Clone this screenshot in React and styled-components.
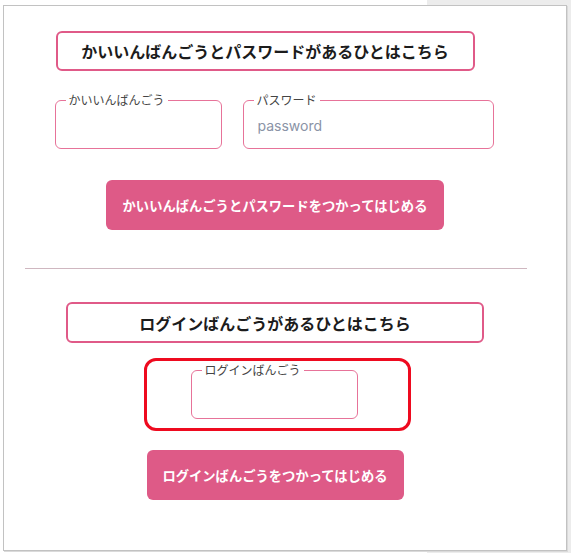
import React from 'react';
import styled, { createGlobalStyle } from 'styled-components';

const GlobalStyle = createGlobalStyle`
  html, body {
    margin: 0;
    padding: 0;
  }
  body {
    font-family: Inter, "Noto Sans CJK JP", sans-serif;
    background: linear-gradient(to right, #ffffff 0, #ffffff 427px, #ececec 427px);
  }
`;

const Page = styled.div`
  min-height: 553px;
  padding: 5px 4px 2px 3px;
  box-sizing: border-box;
`;

const Panel = styled.div`
  background: #fff;
  border: 1px solid #c2c2c2;
  box-shadow: 1px 1px 0 #dadada;
  height: 546px;
  box-sizing: border-box;
  padding: 25px 40px 0 20px;
`;

const Column = styled.div`
  display: flex;
  flex-direction: column;
  align-items: center;
`;

const Title = styled.div`
  width: ${(p) => p.$width || 418}px;
  height: ${(p) => p.$height || 40}px;
  box-sizing: border-box;
  border: 2px solid #e05a88;
  border-radius: 6px;
  display: flex;
  align-items: center;
  justify-content: center;
  font-family: "Noto Sans CJK JP", sans-serif;
  font-size: 16px;
  font-weight: 700;
  color: #1c1c1c;
  transform: translateX(${(p) => p.$shift || 0}px);
  margin-bottom: ${(p) => p.$gap || 0}px;
`;

const FieldRow = styled.div`
  display: flex;
  gap: 21px;
  margin-bottom: 31px;
  transform: translateX(-1px);
`;

const Field = styled.fieldset`
  margin: 0;
  width: ${(p) => p.$width}px;
  box-sizing: border-box;
  padding: 0 10px 5px;
  border: 1px solid #e77399;
  border-radius: 6px;
  min-inline-size: 0;
`;

const Legend = styled.legend`
  padding: 0 3px;
  font-family: "Noto Sans CJK JP", sans-serif;
  font-size: 12px;
  line-height: 14px;
  color: #444;
`;

const Input = styled.input`
  display: block;
  width: 100%;
  height: 36px;
  box-sizing: border-box;
  border: none;
  outline: none;
  padding: 0 4px;
  font-family: Inter, sans-serif;
  font-size: 14px;
  color: #333;
  background: transparent;

  &::placeholder {
    color: #8a93a6;
  }
`;

const Button = styled.button`
  width: ${(p) => p.$width}px;
  height: 50px;
  padding: 0;
  border: none;
  border-radius: 6px;
  background: #de5a87;
  color: #fff;
  font-family: "Noto Sans CJK JP", sans-serif;
  font-size: 13.3px;
  font-weight: 700;
  cursor: pointer;
  margin-bottom: ${(p) => p.$gap || 0}px;
`;

const Divider = styled.hr`
  align-self: stretch;
  margin: 0 -1px 33px 1px;
  border: none;
  border-top: 1px solid #cfb7c0;
`;

const LoginBox = styled.div`
  width: 267px;
  box-sizing: border-box;
  border: 3px solid #ee0a1f;
  border-radius: 12px;
  padding: 2px 50px 9px 44px;
  margin: 15px 0 19px;
  transform: translateX(2px);
`;

export default function App() {
  return (
    <>
      <GlobalStyle />
      <Page>
        <Panel>
          <Column>
            <Title $width={419} $shift={-10} $gap={22}>
              かいいんばんごうとパスワードがあるひとはこちら
            </Title>
            <FieldRow>
              <Field $width={167}>
                <Legend>かいいんばんごう</Legend>
                <Input type="text" />
              </Field>
              <Field $width={251}>
                <Legend>パスワード</Legend>
                <Input type="password" placeholder="password" />
              </Field>
            </FieldRow>
            <Button $width={338} $gap={38}>
              かいいんばんごうとパスワードをつかってはじめる
            </Button>
            <Divider />
            <Title $height={41}>ログインばんごうがあるひとはこちら</Title>
            <LoginBox>
              <Field $width={167}>
                <Legend>ログインばんごう</Legend>
                <Input type="text" />
              </Field>
            </LoginBox>
            <Button $width={257}>ログインばんごうをつかってはじめる</Button>
          </Column>
        </Panel>
      </Page>
    </>
  );
}
